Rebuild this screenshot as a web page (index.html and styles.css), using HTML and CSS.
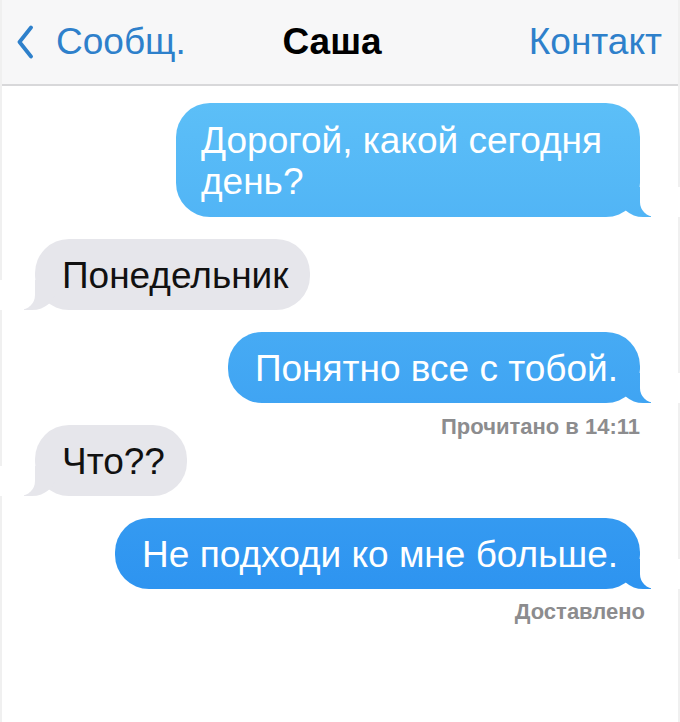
FILE: index.html
```html
<!DOCTYPE html>
<html lang="ru">
<head>
    <meta charset="UTF-8">
    <meta name="viewport" content="width=device-width, initial-scale=1.0">
    <title>Саша</title>
    <link rel="stylesheet" href="styles.css">
</head>
<body>

    <div class="screen">
        <header class="nav">
            <a class="nav-back" href="#">
                <svg class="chevron" width="18" height="34" viewBox="0 0 18 34">
                    <polyline points="15,2.5 3.5,17 15,31.5" fill="none" stroke="currentColor" stroke-width="3.8" stroke-linecap="round" stroke-linejoin="round"/>
                </svg>
                <span>Сообщ.</span>
            </a>
            <div class="nav-title">Саша</div>
            <a class="nav-action" href="#">Контакт</a>
        </header>

        <main class="thread">
            <div class="bubble bubble-out bubble-multiline">Дорогой, какой сегодня<br>день?</div>
            <div class="bubble bubble-in">Понедельник</div>
            <div class="bubble bubble-out">Понятно все с тобой.</div>
            <div class="receipt">Прочитано в 14:11</div>
            <div class="bubble bubble-in">Что??</div>
            <div class="bubble bubble-out">Не подходи ко мне больше.</div>
            <div class="receipt receipt-wide">Доставлено</div>
        </main>
    </div>

</body>
</html>
```

FILE: styles.css
```css
body {
    margin: 0;
    padding: 0;
    background: #fff;
    font-family: "Liberation Sans", Arial, sans-serif;
}

.screen {
    min-height: 100vh;
    border-left: 2px solid #f0f0f0;
    border-right: 2px solid #f0f0f0;
    box-sizing: border-box;
}

/* top bar */
.nav {
    height: 84px;
    display: grid;
    grid-template-columns: 1fr auto 1fr;
    align-items: center;
    padding: 0 16px 0 14px;
    background: #f7f7f8;
    border-bottom: 2px solid #d8d8da;
    font-size: 37px;
}

.nav a {
    color: #2e80cb;
    text-decoration: none;
}

.nav-back {
    display: flex;
    align-items: center;
    gap: 22px;
}

.chevron {
    display: block;
}

.nav-title {
    font-weight: bold;
    color: #000;
    padding-right: 14px;
}

.nav-action {
    justify-self: end;
}

/* messages */
.thread {
    display: flex;
    flex-direction: column;
    padding: 17px 38px 30px 33px;
}

.bubble {
    position: relative;
    box-sizing: border-box;
    padding: 16px 22px 14px 27px;
    border-radius: 34px;
    font-size: 37px;
    line-height: 41px;
    white-space: nowrap;
}

.bubble + .bubble {
    margin-top: 22px;
}

.bubble-multiline {
    padding: 17px 38px 15px 25px;
}

.bubble-out {
    align-self: flex-end;
    color: #fff;
    background: linear-gradient(180deg, #66c8f9 0px, #2188ee 722px) fixed;
}

.bubble-in {
    align-self: flex-start;
    color: #111;
    background: #e6e6eb;
}

/* tails */
.bubble::before,
.bubble::after {
    content: "";
    position: absolute;
    bottom: 0;
    height: 30px;
}

.bubble-out::before {
    right: -11px;
    width: 32px;
    background: inherit;
    border-bottom-left-radius: 24px 21px;
}

.bubble-out::after {
    right: -40px;
    width: 40px;
    background: #fff;
    border-bottom-left-radius: 15px;
}

.bubble-in::before {
    left: -11px;
    width: 32px;
    background: #e6e6eb;
    border-bottom-right-radius: 24px 21px;
}

.bubble-in::after {
    left: -40px;
    width: 40px;
    background: #fff;
    border-bottom-right-radius: 15px;
}

/* delivery status under an outgoing bubble */
.receipt {
    align-self: flex-end;
    margin-top: 12px;
    font-size: 22px;
    line-height: 24px;
    font-weight: bold;
    color: #8c8c8e;
}

.receipt-wide {
    margin-right: -5px;
    margin-top: 11px;
}

.receipt + .bubble-in {
    margin-top: -14px;
}
```
